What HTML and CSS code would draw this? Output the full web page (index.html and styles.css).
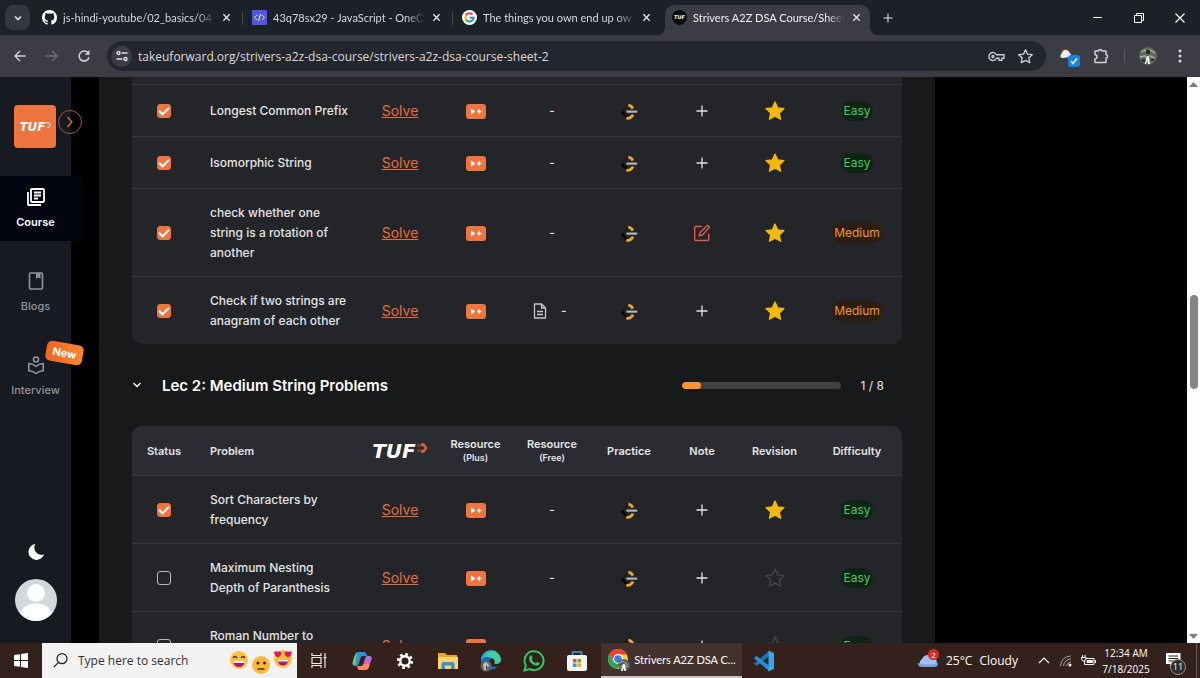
FILE: index.html
```html
<!DOCTYPE html>
<html lang="en">
<head>
    <meta charset="UTF-8">
    <meta name="viewport" content="width=device-width, initial-scale=1.0">
    <title>Strivers A2Z DSA Course/Sheet</title>
    <link rel="stylesheet" href="styles.css">
</head>
<body>
    <!-- shared icons -->
    <svg class="defs" aria-hidden="true">
        <symbol id="close" viewBox="0 0 10 10"><path d="M1.5 1.5l7 7M8.5 1.5l-7 7" stroke="currentColor" stroke-width="1.5"/></symbol>
        <symbol id="plus" viewBox="0 0 12 12"><path d="M6 .5v11M.5 6h11" stroke="currentColor" stroke-width="1.3"/></symbol>
        <symbol id="star" viewBox="0 0 20 20"><path d="M10 1l2.7 5.9 6.3.7-4.7 4.3 1.3 6.4L10 15.1l-5.600 3.200 1.300-6.400L1 7.600l6.300-.7z" stroke-linejoin="round"/></symbol>
        <symbol id="video" viewBox="0 0 20 15"><rect width="20" height="15" rx="3" fill="#ee7440"/><path d="M5 4.500v6l4.500-3z" fill="#fff"/><path d="M13.200 5.300v4.400M11 7.500h4.400" stroke="#fff" stroke-width="1.300"/></symbol>
        <symbol id="leet" viewBox="0 0 18 18"><path d="M9 2.500L2 10" fill="none" stroke="#1a1b1d" stroke-width="1.200"/><path d="M1.800 10l5.200 5.500" stroke="#050505" stroke-width="2.600"/><path d="M8.300 3.200q3 .3 4.600 3.500" fill="none" stroke="#f0a52e" stroke-width="2.700"/><path d="M6.300 16q4 1.500 6.800-3.400" fill="none" stroke="#f0a52e" stroke-width="2.700"/><path d="M7.300 9.700h9" stroke="#b0b1b4" stroke-width="2.200" stroke-linecap="round"/></symbol>
    </svg>

    <header class="tabstrip">
        <button class="tab-search" aria-label="Search tabs"><svg width="10" height="10" viewBox="0 0 10 10"><path d="M2 3.500l3 3 3-3" fill="none" stroke="#e4e5e9" stroke-width="1.600"/></svg></button>
        <div class="tab">
            <svg width="15" height="15" viewBox="0 0 16 16"><path fill="#fff" d="M8 0C3.580 0 0 3.580 0 8c0 3.540 2.290 6.530 5.470 7.590.4.070.55-.17.55-.38v-1.490c-2.010.37-2.530-.49-2.690-.94-.09-.23-.48-.94-.82-1.130-.28-.15-.68-.52-.01-.53.63-.01 1.080.58 1.230.82.72 1.210 1.870.87 2.330.66.07-.52.28-.87.51-1.070-1.780-.2-3.640-.89-3.640-3.950 0-.87.31-1.590.82-2.150-.08-.2-.36-1.020.08-2.120 0 0 .67-.21 2.200.82a7.400 7.400 0 0 1 4 0c1.530-1.040 2.200-.82 2.200-.82.44 1.100.16 1.920.08 2.120.51.56.82 1.270.82 2.150 0 3.070-1.870 3.750-3.650 3.950.29.25.54.73.54 1.480v2.200c0 .21.15.46.55.38A8 8 0 0 0 16 8c0-4.420-3.580-8-8-8z"/></svg>
            <span class="tab-title">js-hindi-youtube/02_basics/04_</span>
            <button class="tab-close" aria-label="Close tab"><svg><use href="#close"/></svg></button>
        </div>
        <div class="tab">
            <svg width="15" height="15" viewBox="0 0 15 15"><rect width="15" height="15" rx="1" fill="#5057e8"/><path d="M5 5L2.500 7.500 5 10M10 5l2.500 2.500L10 10M8.500 4l-2 7" fill="none" stroke="#fff"/></svg>
            <span class="tab-title">43q78sx29 - JavaScript - OneC</span>
            <button class="tab-close" aria-label="Close tab"><svg><use href="#close"/></svg></button>
        </div>
        <div class="tab">
            <svg width="15" height="15" viewBox="0 0 15 15"><circle cx="7.500" cy="7.500" r="7.500" fill="#fff"/><g fill="none" stroke-width="2"><path d="M3.900 5.400A4.200 4.200 0 0 1 10.500 4.500" stroke="#ea4335"/><path d="M3.900 5.400a4.200 4.200 0 0 0 0 4.200" stroke="#fbbc05"/><path d="M3.900 9.600a4.200 4.200 0 0 0 6.400 1" stroke="#34a853"/><path d="M10.300 10.600a4.200 4.200 0 0 0 1.400-2.800H7.600" stroke="#4285f4"/></g></svg>
            <span class="tab-title">The things you own end up ow</span>
            <button class="tab-close" aria-label="Close tab"><svg><use href="#close"/></svg></button>
        </div>
        <div class="tab active">
            <span class="tuf-favicon">TUF</span>
            <span class="tab-title">Strivers A2Z DSA Course/Sheet</span>
            <button class="tab-close" aria-label="Close tab"><svg><use href="#close"/></svg></button>
        </div>
        <button class="new-tab" aria-label="New tab"><svg width="10" height="10"><use href="#plus"/></svg></button>
        <div class="window-controls">
            <button aria-label="Minimize"><svg width="10" height="10"><path d="M0 4.500h9" stroke="#fff"/></svg></button>
            <button aria-label="Restore"><svg width="10" height="10" fill="none" stroke="#fff"><path d="M.5 2.500h7v7h-7zM2.500 2V.5h7v7H8"/></svg></button>
            <button aria-label="Close"><svg width="10" height="10"><path d="M.5.5l9 9M9.500.5l-9 9" stroke="#fff" stroke-width="1.200"/></svg></button>
        </div>
    </header>

    <nav class="toolbar">
        <button aria-label="Back"><svg width="14" height="14" viewBox="0 0 14 14"><path d="M12.500 7H2.500M7 2L2 7l5 5" fill="none" stroke="#d3d4d8" stroke-width="1.400"/></svg></button>
        <button aria-label="Forward"><svg width="14" height="14" viewBox="0 0 14 14"><path d="M1.500 7h10M7 2l5 5-5 5" fill="none" stroke="#74757b" stroke-width="1.400"/></svg></button>
        <button aria-label="Reload"><svg width="14" height="14" viewBox="0 0 14 14"><path d="M12 8.200A5 5 0 1 1 10.800 3.600L12 5" fill="none" stroke="#d3d4d8" stroke-width="1.500"/><path d="M12.500 1v4.800H7.800z" fill="#d3d4d8"/></svg></button>
        <div class="address">
            <button class="site-info" aria-label="Site information"><svg width="12" height="12" viewBox="0 0 12 12" fill="none" stroke="#dcdde0" stroke-width="1.400"><circle cx="2.500" cy="3" r="1.500"/><path d="M5.500 3H11.500M.5 9H6.500"/><circle cx="9.500" cy="9" r="1.500"/></svg></button>
            <input type="text" aria-label="Address" value="takeuforward.org/strivers-a2z-dsa-course/strivers-a2z-dsa-course-sheet-2">
            <button aria-label="Passwords"><svg width="17" height="11" viewBox="0 0 17 11" fill="none" stroke="#c8c9cd" stroke-width="1.400"><path d="M8.500 3.800A4 4 0 1 0 8.500 7.200H11v2h3v-2h2V3.800z"/><circle cx="5" cy="5.500" r="1"/></svg></button>
            <button aria-label="Bookmark"><svg class="bookmark"><use href="#star"/></svg></button>
        </div>
        <button aria-label="Extension"><svg width="22" height="22" viewBox="0 0 22 22"><path d="M4 13C1 12 3 9 4 8c1-4 6-4 7-1 2 1 2 3 2 5z" fill="#f2f0ed"/><path d="M3 8q2-5 6-3" fill="none" stroke="#75614d"/><rect x="10" y="10" width="12" height="12" rx="3" fill="#1685e2"/><path d="M13 16l2 2.500 4-5" fill="none" stroke="#fff" stroke-width="1.500"/></svg></button>
        <button aria-label="Extensions"><svg width="16" height="16" viewBox="0 0 16 16"><path d="M2 3h3.500a1.600 1.600 0 0 1 3.200 0h4.300v3.800a1.600 1.600 0 0 1 0 3.200v4.500H2v-3.700a2 2 0 0 0 0-4z" fill="none" stroke="#d0d1d5" stroke-width="1.500" stroke-linejoin="round"/></svg></button>
        <span class="divider"></span>
        <button aria-label="Profile"><svg width="18" height="18" viewBox="0 0 18 18"><circle cx="9" cy="9" r="9" fill="#5d6b56"/><path d="M2 5l4-2 2 3 3-3 5 3M1 10l5-1 2 2 3-2 5 2" fill="none" stroke="#a9b5a1" stroke-width="1.300"/><path d="M7 3h4v4H7zM3 12h3v3H3zM12 12h3v2h-3z" fill="#25302a"/><path d="M8 9l2 1 1 7H9l-.5-4L7 17H6z" fill="#fff"/></svg></button>
        <button aria-label="Menu"><svg width="4" height="14" fill="#d9dadd"><circle cx="2" cy="2" r="1.500"/><circle cx="2" cy="7" r="1.500"/><circle cx="2" cy="12" r="1.500"/></svg></button>
    </nav>

    <main class="page">
        <aside class="sidebar">
            <a href="#" class="logo">TUF<svg width="5" height="6" viewBox="0 0 5 6"><path d="M0 .7h3L4.300 3 3 5.300H1" fill="none" stroke="#fff"/></svg></a>
            <button class="expand" aria-label="Expand menu"><svg width="8" height="12" viewBox="0 0 8 12"><path d="M1.500 1L6 6l-4.500 5" fill="none" stroke="#e77643" stroke-width="1.200"/></svg></button>
            <nav class="side-nav">
                <a href="#" class="side-item current">
                    <svg width="20" height="20" viewBox="0 0 20 20" fill="none" stroke="currentColor" stroke-width="1.800"><rect x="5" y="2" width="13" height="13" rx="1"/><path d="M2 5v12.500q0 .5.5.5H15M8 5.500h7M8 8.500h7M8 11.500h4"/></svg>
                    <span>Course</span>
                </a>
                <a href="#" class="side-item">
                    <svg width="20" height="20" viewBox="0 0 20 20" fill="none" stroke="currentColor" stroke-width="1.600"><rect x="3.500" y="2" width="13" height="16" rx="1"/><path d="M10 2h4.500v6L12.200 6.300 10 8z" fill="currentColor" stroke="none"/></svg>
                    <span>Blogs</span>
                </a>
                <a href="#" class="side-item">
                    <svg width="20" height="20" viewBox="0 0 20 20" fill="none" stroke="currentColor" stroke-width="1.600"><circle cx="10" cy="4.500" r="2.500"/><path d="M2.800 8.500q4 0 7.200 3 3.200-3 7.200-3v7.300q-4 0-7.200 2.700-3.200-2.700-7.200-2.700z"/></svg>
                    <span>Interview</span>
                    <b class="new-badge">New</b>
                </a>
            </nav>
            <button class="theme" aria-label="Dark mode"><svg width="18" height="18" viewBox="0 0 18 18"><path d="M8.300 1A8 8 0 1 0 17 11.500 7.300 7.300 0 0 1 8.300 1z" fill="#fff"/></svg></button>
            <button class="user" aria-label="Account"><svg width="42" height="42" viewBox="0 0 42 42"><circle cx="21" cy="21" r="21" fill="#d2d9db"/><circle cx="21" cy="14" r="9" fill="#fff"/><path d="M5 34.500C8 27 14 24.500 21 24.500S34 27 37 34.500A21 21 0 0 1 5 34.500z" fill="#fff"/></svg></button>
        </aside>

        <section class="sheet">
            <table class="problems">
                <colgroup><col class="c-status"><col class="c-problem"><col class="c-tuf"><col class="c-plus"><col class="c-free"><col class="c-practice"><col class="c-note"><col class="c-revision"><col class="c-difficulty"></colgroup>
                <tbody>
                    <tr class="sliver"><td colspan="9"></td></tr>
                    <tr>
                        <td><input type="checkbox" aria-label="Longest Common Prefix" checked></td>
                        <td>Longest Common Prefix</td>
                        <td><a href="#">Solve</a></td>
                        <td><svg class="video"><use href="#video"/></svg></td>
                        <td>-</td>
                        <td><svg class="leet"><use href="#leet"/></svg></td>
                        <td><button aria-label="Add note"><svg class="add"><use href="#plus"/></svg></button></td>
                        <td><button aria-label="Revision"><svg class="star on"><use href="#star"/></svg></button></td>
                        <td><span class="level easy">Easy</span></td>
                    </tr>
                    <tr>
                        <td><input type="checkbox" aria-label="Isomorphic String" checked></td>
                        <td>Isomorphic String</td>
                        <td><a href="#">Solve</a></td>
                        <td><svg class="video"><use href="#video"/></svg></td>
                        <td>-</td>
                        <td><svg class="leet"><use href="#leet"/></svg></td>
                        <td><button aria-label="Add note"><svg class="add"><use href="#plus"/></svg></button></td>
                        <td><button aria-label="Revision"><svg class="star on"><use href="#star"/></svg></button></td>
                        <td><span class="level easy">Easy</span></td>
                    </tr>
                    <tr>
                        <td><input type="checkbox" aria-label="check whether one string is a rotation of another" checked></td>
                        <td>check whether one string is a rotation of another</td>
                        <td><a href="#">Solve</a></td>
                        <td><svg class="video"><use href="#video"/></svg></td>
                        <td>-</td>
                        <td><svg class="leet"><use href="#leet"/></svg></td>
                        <td><button aria-label="Edit note"><svg width="18" height="18" viewBox="0 0 18 18" fill="none" stroke="#df5a50" stroke-width="1.400" stroke-linejoin="round"><path d="M9 2.500H3q-1.300 0-1.300 1.300v11.400q0 1.300 1.300 1.300h11.400q1.300 0 1.300-1.300V9.500"/><path d="M14 1.800q.8-.8 1.800.1t.1 1.900L9.500 11l-3.300.8.9-3.200z"/></svg></button></td>
                        <td><button aria-label="Revision"><svg class="star on"><use href="#star"/></svg></button></td>
                        <td><span class="level medium">Medium</span></td>
                    </tr>
                    <tr>
                        <td><input type="checkbox" aria-label="Check if two strings are anagram of each other" checked></td>
                        <td>Check if two strings are anagram of each other</td>
                        <td><a href="#">Solve</a></td>
                        <td><svg class="video"><use href="#video"/></svg></td>
                        <td><span class="free"><svg width="14" height="16" viewBox="0 0 14 16" fill="none" stroke="#c5c6c8" stroke-width="1.300"><path d="M1.500 1h7L12.500 5v10h-11zM8.500 1v4h4M4 8.500h6M4 11.500h6"/></svg>-</span></td>
                        <td><svg class="leet"><use href="#leet"/></svg></td>
                        <td><button aria-label="Add note"><svg class="add"><use href="#plus"/></svg></button></td>
                        <td><button aria-label="Revision"><svg class="star on"><use href="#star"/></svg></button></td>
                        <td><span class="level medium">Medium</span></td>
                    </tr>
                </tbody>
            </table>

            <div class="lecture">
                <svg width="10" height="10" viewBox="0 0 10 10"><path d="M1.500 3L5 6.500 8.500 3" fill="none" stroke="#fff" stroke-width="1.400"/></svg>
                <h2>Lec 2: Medium String Problems</h2>
                <div class="progress"><div class="progress-fill" style="width: 12.5%"></div></div>
                <span class="count">1 / 8</span>
            </div>

            <table class="problems rounded-top">
                <colgroup><col class="c-status"><col class="c-problem"><col class="c-tuf"><col class="c-plus"><col class="c-free"><col class="c-practice"><col class="c-note"><col class="c-revision"><col class="c-difficulty"></colgroup>
                <thead>
                    <tr>
                        <th>Status</th>
                        <th>Problem</th>
                        <th><span class="tuf-plus">TUF<svg width="12" height="12" viewBox="0 0 12 12"><path d="M1 2.500h5M1 7.500h4" stroke="#793e28" stroke-width="2.500"/><path d="M5 1.500h2.500L10 5 7.500 8.500H5" fill="none" stroke="#df6338" stroke-width="2.500"/></svg></span></th>
                        <th>Resource<small>(Plus)</small></th>
                        <th>Resource<small>(Free)</small></th>
                        <th>Practice</th>
                        <th>Note</th>
                        <th>Revision</th>
                        <th>Difficulty</th>
                    </tr>
                </thead>
                <tbody>
                    <tr>
                        <td><input type="checkbox" aria-label="Sort Characters by frequency" checked></td>
                        <td>Sort Characters by frequency</td>
                        <td><a href="#">Solve</a></td>
                        <td><svg class="video"><use href="#video"/></svg></td>
                        <td>-</td>
                        <td><svg class="leet"><use href="#leet"/></svg></td>
                        <td><button aria-label="Add note"><svg class="add"><use href="#plus"/></svg></button></td>
                        <td><button aria-label="Revision"><svg class="star on"><use href="#star"/></svg></button></td>
                        <td><span class="level easy">Easy</span></td>
                    </tr>
                    <tr>
                        <td><input type="checkbox" aria-label="Maximum Nesting Depth of Paranthesis"></td>
                        <td>Maximum Nesting Depth of Paranthesis</td>
                        <td><a href="#">Solve</a></td>
                        <td><svg class="video"><use href="#video"/></svg></td>
                        <td>-</td>
                        <td><svg class="leet"><use href="#leet"/></svg></td>
                        <td><button aria-label="Add note"><svg class="add"><use href="#plus"/></svg></button></td>
                        <td><button aria-label="Revision"><svg class="star"><use href="#star"/></svg></button></td>
                        <td><span class="level easy">Easy</span></td>
                    </tr>
                    <tr>
                        <td><input type="checkbox" aria-label="Roman Number to Integer"></td>
                        <td>Roman Number to Integer</td>
                        <td><a href="#">Solve</a></td>
                        <td><svg class="video"><use href="#video"/></svg></td>
                        <td>-</td>
                        <td><svg class="leet"><use href="#leet"/></svg></td>
                        <td><button aria-label="Add note"><svg class="add"><use href="#plus"/></svg></button></td>
                        <td><button aria-label="Revision"><svg class="star"><use href="#star"/></svg></button></td>
                        <td><span class="level easy">Easy</span></td>
                    </tr>
                </tbody>
            </table>
        </section>

        <div class="scrollbar">
            <svg width="9" height="5"><path d="M0 5l4.500-5L9 5z" fill="#7d7d7d"/></svg>
            <div class="thumb"></div>
            <svg width="9" height="5"><path d="M0 0l4.500 5L9 0z" fill="#7d7d7d"/></svg>
        </div>
    </main>

    <footer class="taskbar">
        <button class="start" aria-label="Start"><svg width="14" height="15" viewBox="0 0 14 15" fill="#fff"><path d="M0 2l6-.8V7H0zM7 1l7-1v7H7zM0 8h6v5.800L0 13zM7 8h7v7l-7-1z"/></svg></button>
        <label class="search">
            <svg width="15" height="15" viewBox="0 0 15 15" fill="none" stroke="#1c1c1c" stroke-width="1.200"><circle cx="9" cy="5.700" r="5"/><path d="M5.500 9.300L.8 14.200"/></svg>
            <input type="text" placeholder="Type here to search" aria-label="Search">
            <svg width="64" height="28" viewBox="0 0 64 28">
                <circle cx="9" cy="13" r="9" fill="#ffc43a"/><path d="M3 11q2-3 4 0M11 11q2-3 4 0" fill="none" stroke="#512a1b" stroke-width="1.400"/><path d="M3 14h12q-1 6-6 6t-6-6z" fill="#a5158f"/><path d="M3.500 14h11v2h-11z" fill="#fff"/>
                <circle cx="31" cy="18" r="9" fill="#fdb83b"/><circle cx="28" cy="16" r="1.500" fill="#3a241c"/><circle cx="34.500" cy="16" r="1.500" fill="#3a241c"/><path d="M27.500 22h7" stroke="#3a241c" stroke-width="1.400"/>
                <circle cx="53" cy="12" r="9" fill="#ffbd38"/><path d="M48 10.500c-6-3-4-8 0-5.500 4-2 5 3 0 5.500zM58 10.500c-5-2.500-4-7.500 0-5.500 4-2.500 6 2.500 0 5.500z" fill="#e3185c"/><path d="M47.500 13h11q-1 5.500-5.500 5.500T47.500 13z" fill="#a5158f"/><path d="M48 13h10v1.500H48z" fill="#fff"/>
            </svg>
        </label>
        <div class="apps">
            <button aria-label="Task view"><svg width="16" height="15" viewBox="0 0 16 15" fill="none" stroke="#eeeae9" stroke-width="1.200"><path d="M1 0v2.500h9V0M1 15v-2.500h9V15M1 4.500h9v6H1zM14 0v15M12.500 4.500h3"/></svg></button>
            <button aria-label="Copilot"><svg width="20" height="20" viewBox="0 0 20 20"><path d="M6 1h6q2 0 2.600 2l.7 2H11q-2 0-2.500 2L7 12q-.7 3-3 3H3q-3 0-2.500-3L3 4q1-3 3-3z" fill="#2295dc"/><path d="M.8 10.500L3 4q.5-2 2-2.500L3.500 14H3q-3 0-2.200-3.500z" fill="#86c64c"/><path d="M14 19H8q-2 0-2.600-2l-.7-2H9q2 0 2.500-2L13 8q.7-3 3-3h1q3 0 2.500 3L17 16q-1 3-3 3z" fill="#e75d9d"/><path d="M12 11l1-3q.7-3 3-3h1q3 0 2.500 3l-1 3z" fill="#b16ced"/><path d="M6 15h3q2 0 2.500-2h6L17 16q-1 3-3 3H8q-1.500 0-2-1z" fill="#f58660"/></svg></button>
            <button aria-label="Settings"><svg width="18" height="18" viewBox="0 0 18 18" fill="none" stroke="#fff"><circle cx="9" cy="9" r="6.700" stroke-width="2.800" stroke-dasharray="2.700 2.562"/><circle cx="9" cy="9" r="4.700" stroke-width="2.400"/></svg></button>
            <button aria-label="File Explorer"><svg width="20" height="18" viewBox="0 0 20 18"><path d="M0 1h7l2 2h10v13H0z" fill="#e8a42d"/><path d="M0 5h20v12H0z" fill="#ffd36b"/><path d="M3.500 17v-5q0-2 2-2h9q2 0 2 2v5H13v-3.500H7V17z" fill="#3c8ed2"/></svg></button>
            <button aria-label="Edge"><svg width="22" height="22" viewBox="0 0 22 22"><path d="M1 11A10 10 0 0 1 21 9.500c0 4-3.500 5-6.500 4.500 1-4-1-6-4.500-6-5 0-7 2-9 3z" fill="#3dcfa5"/><path d="M1 11A10 10 0 0 1 14 1.500C7 2 4 6 2 10z" fill="#2baadd"/><path d="M1 12C1 7 9 5 11 9c-4 2-3 9 7 7.500A10 10 0 0 1 1 12z" fill="#146ebd"/><circle cx="6" cy="16" r="5.500" fill="#5b666b"/><path d="M3 14l3-2 3 3-2 5H4z" fill="#c1c3c3"/><path d="M6 15l2 3-2 2z" fill="#303739"/></svg></button>
            <button aria-label="WhatsApp"><svg width="22" height="22" viewBox="0 0 22 22"><path d="M1.500 20.500l1.400-5A9.500 9.500 0 1 1 6.500 19z" fill="none" stroke="#31c764" stroke-width="2"/><path d="M7 6q1-1.500 2 .2l.7 1.900-1 1.400q1.200 2.600 4 3.700l1.400-1.300 2.300 1q.8.300-.2 1.700-1.700 1.700-4.400.6-4.600-1.700-5.700-5.800Q5.800 7.500 7 6z" fill="#31c764"/></svg></button>
            <button aria-label="Microsoft Store"><svg width="22" height="22" viewBox="0 0 22 22"><path d="M6.500 6V2h9v4" fill="none" stroke="#31a6e5" stroke-width="1.500"/><rect x="1" y="5" width="20" height="16" rx="2" fill="#f4f4f4"/><path d="M7 9h3.500v3.500H7z" fill="#e55328"/><path d="M11.500 9H15v3.500h-3.500z" fill="#77ac26"/><path d="M7 13.500h3.500V17H7z" fill="#2a9bd9"/><path d="M11.500 13.500H15V17h-3.500z" fill="#e9ad24"/></svg></button>
        </div>
        <button class="running">
            <svg width="24" height="24" viewBox="0 0 24 24"><circle cx="11" cy="11" r="10" fill="#ffce42"/><path d="M2.300 6A10 10 0 0 1 20 6.500h-9L6.700 13.500z" fill="#e94235"/><path d="M2.300 6A10 10 0 0 0 10 21l4.500-7.500-8 0z" fill="#2aa652"/><circle cx="11" cy="11" r="4.900" fill="#fff"/><circle cx="11" cy="11" r="3.800" fill="#3d7de9"/><circle cx="17" cy="17" r="6" fill="#566359"/><path d="M12 15l4-2 5 4M13 19l4-2 4 2" stroke="#a7b2a7" fill="none"/><path d="M16 16h2l1 7h-1.500l-1-3-1 3H14z" fill="#fff"/></svg>
            <span>Strivers A2Z DSA C...</span>
        </button>
        <button class="vscode" aria-label="Visual Studio Code"><svg width="22" height="22" viewBox="0 0 22 22"><path d="M16 1v5.500L3.500 16 1 13.700z" fill="#1977b9"/><path d="M1 8.300L3.500 6 16 15.500V21z" fill="#2290d6"/><path d="M15.500.5L21 3v16l-5.500 2.500z" fill="#38a7ed"/></svg></button>
        <div class="tray">
            <button class="weather">
                <span class="cloud"><svg width="22" height="15" viewBox="0 0 22 15"><path d="M5 14a4.500 4.500 0 0 1 0-8 6.500 6.500 0 0 1 11.500-1A4.800 4.800 0 0 1 17 14z" fill="#9fc0f1"/><path d="M5 14Q1 14 .8 10q10 3 20.500 0-.5 4-4.300 4z" fill="#7ba1e5"/></svg><i>2</i></span>
                <span>25°C</span><span>Cloudy</span>
            </button>
            <button aria-label="Hidden icons"><svg width="12" height="7" viewBox="0 0 12 7"><path d="M1 6l5-5 5 5" fill="none" stroke="#fff" stroke-width="1.200"/></svg></button>
            <button aria-label="Network"><svg width="12" height="12" viewBox="0 0 12 12" fill="none" stroke="#aaa19e"><path d="M.5 11Q1 2 11 .8M3.500 11Q4 5 11 3.800M6.500 11Q7 7.500 11 6.800"/><circle cx="10" cy="10" r="1.500" fill="#fff" stroke="none"/></svg></button>
            <button aria-label="Battery"><svg width="15" height="12" viewBox="0 0 15 12" fill="none" stroke="#fff"><path d="M5 3.500h8v6H3.500V6M14.500 5v3M1.500 0v2M4 0v2M.5 2.500h4.500v1.500L3.500 6H2L.5 4z"/><path d="M6 5.500h5.500v2H6z" fill="#fff"/></svg></button>
            <button class="clock"><span>12:34 AM</span><span>7/18/2025</span></button>
            <button class="notices" aria-label="Notifications"><svg width="15" height="15" viewBox="0 0 15 15"><path d="M0 0h14.500v11H7l-3 3.500V11H0z" fill="#fff"/><path d="M2.500 3H12M2.500 5.500H12M2.500 8H9" stroke="#34211c"/></svg><i>11</i></button>
        </div>
    </footer>
</body>
</html>
```
FILE: styles.css
```css
* {
    box-sizing: border-box;
}
body {
    margin: 0;
    height: 100vh;
    display: flex;
    flex-direction: column;
    overflow: hidden;
    background: #000;
    color: #e3e4e6;
    font-family: "Open Sans", "Noto Sans", sans-serif;
    font-size: 12px;
}
svg {
    display: block;
    flex-shrink: 0;
}
button {
    display: flex;
    align-items: center;
    justify-content: center;
    padding: 0;
    border: none;
    background: none;
    color: inherit;
    font: inherit;
    cursor: pointer;
}
input {
    font: inherit;
}
a {
    text-decoration: none;
}
.defs {
    position: absolute;
    width: 0;
    height: 0;
}

/* browser tabs */
.tabstrip {
    display: flex;
    flex: 0 0 35px;
    background: #1c2027;
}
.tab-search {
    width: 25px;
    height: 25px;
    margin: 5px 2px 5px 5px;
    border-radius: 8px;
    background: #34373f;
}
.tab {
    display: flex;
    align-items: center;
    flex: 0 1 210px;
    min-width: 0;
    gap: 6px;
    padding: 0 11px 0 10px;
    position: relative;
}
.tab + .tab:not(.active)::before {
    content: "";
    position: absolute;
    left: 0;
    height: 14px;
    width: 1px;
    background: #40444c;
}
.tab-title {
    flex: 1;
    overflow: hidden;
    white-space: nowrap;
    font-family: Lato, "Open Sans", sans-serif;
    font-size: 11px;
    color: #d6d7db;
    mask-image: linear-gradient(to right, #000 88%, transparent);
}
.tab-close {
    width: 10px;
    height: 16px;
}
.tab-close svg {
    width: 9px;
    height: 9px;
}
.tab.active {
    flex-basis: 205px;
    margin: 5px 1px 0 3px;
    padding: 0 9px 5px 7px;
    border-radius: 9px 9px 0 0;
    background: #3b3c44;
}
.tab.active::before,
.tab.active::after {
    content: "";
    position: absolute;
    bottom: 0;
    width: 8px;
    height: 8px;
}
.tab.active::before {
    left: -8px;
    background: radial-gradient(circle at 0 0, transparent 8px, #3b3c44 8px);
}
.tab.active::after {
    right: -8px;
    background: radial-gradient(circle at 100% 0, transparent 8px, #3b3c44 8px);
}
.active .tab-title {
    color: #f0f0f2;
}
.tuf-favicon {
    width: 15px;
    height: 15px;
    border-radius: 50%;
    background: #08090a;
    color: #fff;
    font: italic bold 5px/15px "DejaVu Sans", sans-serif;
    text-align: center;
}
.new-tab {
    width: 34px;
}
.new-tab svg {
    width: 10px;
    height: 10px;
}
.window-controls {
    display: flex;
    margin-left: auto;
}
.window-controls button {
    width: 41px;
}

/* toolbar */
.toolbar {
    display: flex;
    align-items: center;
    flex: 0 0 42px;
    padding: 0 4px;
    background: #3b3c44;
}
.toolbar > button {
    width: 32px;
    height: 30px;
}
.address {
    display: flex;
    align-items: center;
    flex: 1;
    height: 30px;
    margin: 0 7px;
    padding: 0 6px 0 4px;
    border-radius: 15px;
    background: #24262d;
}
.address button {
    width: 29px;
    height: 24px;
}
.address .site-info {
    width: 21px;
    height: 21px;
    border-radius: 50%;
    background: #3b3c44;
}
.address input {
    flex: 1;
    min-width: 0;
    padding: 0 6px;
    border: none;
    outline: none;
    background: none;
    color: #d9dade;
    font-size: 12px;
}
.bookmark {
    width: 15px;
    height: 15px;
    fill: none;
    stroke: #d0d1d5;
    stroke-width: 1.8;
}
.divider {
    width: 1px;
    height: 14px;
    margin: 0 7px;
    background: #5b5c64;
}

/* page */
.page {
    display: flex;
    flex: 1;
    min-height: 0;
    font-family: Inter, "Open Sans", sans-serif;
}
.sidebar {
    display: flex;
    flex-direction: column;
    flex: 0 0 71px;
    padding: 28px 0 22px;
    background: #171a21;
    position: relative;
}
.logo {
    display: flex;
    align-items: center;
    justify-content: center;
    width: 42px;
    height: 43px;
    margin-left: 14px;
    border-radius: 4px;
    background: #ee7440;
    color: #fff;
    font: italic bold 12px "DejaVu Sans", sans-serif;
}
.logo svg {
    margin-bottom: 3px;
}
.expand {
    position: absolute;
    top: 33px;
    right: -11px;
    width: 24px;
    height: 24px;
    border: 1px solid #a4583b;
    border-radius: 50%;
}
.side-nav {
    display: flex;
    flex-direction: column;
    gap: 19px;
    margin-top: 28px;
}
.side-item {
    display: flex;
    flex-direction: column;
    align-items: center;
    gap: 8px;
    height: 65px;
    padding-top: 11px;
    color: #8f949f;
    font-size: 11px;
    font-weight: 500;
    line-height: 15px;
    position: relative;
}
.side-item.current {
    margin-right: -11px;
    padding-right: 11px;
    border-radius: 0 4px 4px 0;
    background: #02050f;
    color: #fff;
    font-weight: 600;
}
.new-badge {
    position: absolute;
    top: -1px;
    left: 46px;
    width: 37px;
    border-radius: 5px;
    background: linear-gradient(to right, #f4651b, #fb8533);
    color: #fff;
    font-size: 11px;
    line-height: 20px;
    text-align: center;
    transform: rotate(10deg);
}
.theme {
    margin-top: auto;
}
.user {
    margin-top: 18px;
}
.sheet {
    flex: 1;
    min-width: 0;
    margin-left: 28px;
    margin-right: 21%;
    padding: 0 33px;
    overflow: hidden;
    background: #18191b;
}

/* problem tables */
.problems {
    width: 100%;
    table-layout: fixed;
    border-collapse: separate;
    border-spacing: 0;
    border-radius: 0 0 10px 10px;
    overflow: hidden;
    background: #242529;
}
.problems.rounded-top {
    border-radius: 10px;
}
.c-status { width: 64px; }
.c-problem { width: 166px; }
.c-tuf { width: 76px; }
.c-plus { width: 75px; }
.c-free { width: 78px; }
.c-practice { width: 76px; }
.c-note { width: 70px; }
.c-revision { width: 75px; }
.c-difficulty { width: 90px; }
.problems td,
.problems th {
    height: 52px;
    padding: 14px 0 13px;
    border-bottom: 1px solid #34363a;
    text-align: center;
    vertical-align: middle;
    font-size: 12px;
    font-weight: 500;
    line-height: 20px;
}
.problems tbody tr:last-child td {
    border-bottom: none;
}
.problems td:nth-child(2),
.problems th:nth-child(2) {
    padding-left: 14px;
    padding-right: 12px;
    text-align: left;
}
.problems .sliver td {
    height: 8px;
    padding: 0;
}
.problems th {
    height: 50px;
    padding: 0;
    background: #2b2c31;
    font-size: 11px;
    font-weight: 600;
    line-height: 14px;
}
.problems small {
    display: block;
    font-size: 9px;
    line-height: 14px;
}
.tuf-plus {
    display: flex;
    align-items: center;
    justify-content: center;
    color: #fff;
    font: italic bold 20px/20px "DejaVu Sans", sans-serif;
}
.tuf-plus svg {
    margin-bottom: 4px;
}
.problems td a {
    color: #e36d3d;
    font-size: 14px;
    font-weight: 400;
    text-decoration: underline;
}
.problems td svg,
.problems td button {
    margin: 0 auto;
}
.problems input {
    appearance: none;
    display: grid;
    place-items: center;
    width: 14px;
    height: 14px;
    margin: 0 auto;
    border: 1px solid #b9babd;
    border-radius: 3px;
}
.problems input:checked {
    border-color: #ee7440;
    background: #ee7440;
}
.problems input:checked::after {
    content: "";
    width: 4px;
    height: 8px;
    margin-bottom: 2px;
    border: solid #fff;
    border-width: 0 2px 2px 0;
    transform: rotate(45deg);
}
.video {
    width: 20px;
    height: 15px;
}
.leet {
    width: 18px;
    height: 18px;
}
.add {
    width: 12px;
    height: 12px;
}
.star {
    width: 20px;
    height: 20px;
    fill: none;
    stroke: #45474b;
    stroke-width: 1.3;
}
.star.on {
    fill: #f2b90d;
    stroke: #f2b90d;
}
.free {
    display: flex;
    align-items: center;
    gap: 14px;
    margin-left: 20px;
}
.problems .free svg {
    margin: 0;
}
.level {
    display: inline-block;
    padding: 0 2px;
    border-radius: 10px;
    font-weight: 400;
    line-height: 20px;
}
.easy {
    background: #0e2413;
    color: #4cc764;
}
.medium {
    background: #2b1e10;
    color: #f09a1a;
}
.lecture {
    display: flex;
    align-items: center;
    height: 82px;
    padding-right: 18px;
    color: #fff;
}
.lecture h2 {
    flex: 1;
    margin: 0 0 0 20px;
    font-size: 15px;
    font-weight: 600;
}
.progress {
    flex: 0 1 159px;
    height: 7px;
    margin-right: 20px;
    border-radius: 4px;
    overflow: hidden;
    background: #414141;
}
.progress-fill {
    height: 100%;
    border-radius: 4px;
    background: #fb9138;
}
.count {
    font-size: 12px;
    color: #e3e4e6;
}

.scrollbar {
    display: grid;
    grid-template-rows: 14px 204fr 94fr 240fr 14px;
    flex: 0 0 13px;
    justify-items: center;
    align-items: center;
    background: #fdfdfd;
}
.thumb {
    grid-row: 3;
    width: 8px;
    height: 100%;
    border-radius: 4px;
    background: #858585;
}
.scrollbar svg:last-child {
    grid-row: 5;
}

/* taskbar */
.taskbar {
    display: flex;
    flex: 0 0 35px;
    background: #34211c;
    color: #fff;
}
.start {
    width: 42px;
}
.search {
    display: flex;
    align-items: center;
    flex: 0 1 255px;
    min-width: 0;
    padding: 0 3px 0 11px;
    background: #f2f2f2;
}
.search input {
    flex: 1;
    min-width: 0;
    padding: 0 0 0 10px;
    border: none;
    outline: none;
    background: none;
    font-size: 12px;
}
.search input::placeholder {
    color: #333;
}
.apps {
    display: flex;
}
.apps button {
    width: 43px;
}
.running {
    gap: 3px;
    width: 141px;
    margin-left: 3px;
    border-bottom: 2px solid #cfc3bf;
    background: #43322d;
    font-family: Lato, "Open Sans", sans-serif;
    font-size: 11px;
}
.vscode {
    width: 44px;
}
.tray {
    display: flex;
    margin-left: auto;
    padding-right: 3px;
    border-right: 1px solid #6b5c57;
    margin-right: 3px;
}
.tray button {
    width: 22px;
}
.tray .weather {
    justify-content: flex-start;
    gap: 7px;
    width: 116px;
}
.cloud,
.notices {
    position: relative;
}
.cloud i,
.notices i {
    position: absolute;
    border-radius: 50%;
    font-style: normal;
    text-align: center;
}
.cloud i {
    top: -4px;
    right: 0;
    width: 11px;
    height: 11px;
    background: #d92a2a;
    font-size: 8px;
    line-height: 11px;
}
.tray .clock {
    flex-direction: column;
    width: 54px;
    font-size: 10px;
    line-height: 16px;
}
.tray .notices {
    width: 40px;
}
.notices i {
    top: 16px;
    right: 7px;
    width: 16px;
    height: 16px;
    border: 1px solid #9a908d;
    background: #2e2b2b;
    font-size: 9px;
    line-height: 14px;
}
```
